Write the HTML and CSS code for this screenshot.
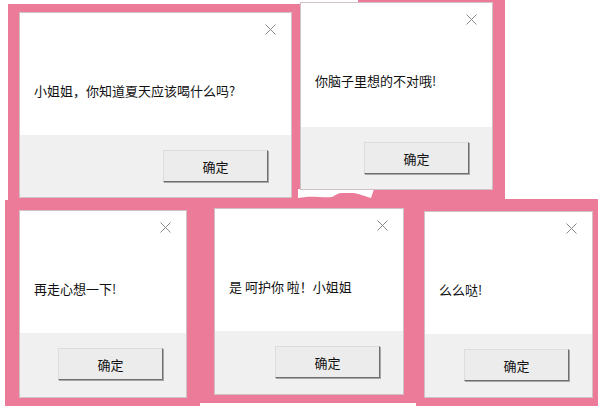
FILE: index.html
```html
<!DOCTYPE html>
<html lang="zh-CN">
<head>
    <meta charset="UTF-8">
    <meta name="viewport" content="width=device-width, initial-scale=1.0">
    <title>小姐姐</title>
    <link rel="stylesheet" href="styles.css">
</head>
<body>
    <div class="desk">
        <!-- pink backdrop pieces -->
        <div class="pink pink-top-left"></div>
        <div class="pink pink-mid"></div>
        <div class="pink pink-cap"></div>
        <div class="pink pink-bot-left"></div>
        <div class="pink pink-bot-mid"></div>
        <div class="pink pink-bot-right"></div>
        <svg class="blob" width="76" height="10" viewBox="0 0 76 10">
            <path d="M0 0 H76 L73 9 C66 7 62 5 56 4 L44 4 C40 4 38 6 34 8 C26 9 16 7 8 8 L0 9 Z" fill="#fff"/>
        </svg>

        <div class="win win-1">
            <div class="win-body">
                <div class="win-head">
                    <svg class="win-close" width="11" height="11" viewBox="0 0 11 11"><path d="M0.5 0.5 L10.5 10.5 M10.5 0.5 L0.5 10.5" stroke="#8a8a8a" stroke-width="1"/></svg>
                </div>
                <p class="win-text">小姐姐，你知道夏天应该喝什么吗?</p>
            </div>
            <div class="win-foot"><button class="win-btn">确定</button></div>
        </div>

        <div class="win win-2">
            <div class="win-body">
                <div class="win-head">
                    <svg class="win-close" width="11" height="11" viewBox="0 0 11 11"><path d="M0.5 0.5 L10.5 10.5 M10.5 0.5 L0.5 10.5" stroke="#8a8a8a" stroke-width="1"/></svg>
                </div>
                <p class="win-text">你脑子里想的不对哦!</p>
            </div>
            <div class="win-foot"><button class="win-btn">确定</button></div>
        </div>

        <div class="win win-3">
            <div class="win-body">
                <div class="win-head">
                    <svg class="win-close" width="11" height="11" viewBox="0 0 11 11"><path d="M0.5 0.5 L10.5 10.5 M10.5 0.5 L0.5 10.5" stroke="#8a8a8a" stroke-width="1"/></svg>
                </div>
                <p class="win-text">再走心想一下!</p>
            </div>
            <div class="win-foot"><button class="win-btn">确定</button></div>
        </div>

        <div class="win win-4">
            <div class="win-body">
                <div class="win-head">
                    <svg class="win-close" width="11" height="11" viewBox="0 0 11 11"><path d="M0.5 0.5 L10.5 10.5 M10.5 0.5 L0.5 10.5" stroke="#8a8a8a" stroke-width="1"/></svg>
                </div>
                <p class="win-text">是 呵护你 啦！小姐姐</p>
            </div>
            <div class="win-foot"><button class="win-btn">确定</button></div>
        </div>

        <div class="win win-5">
            <div class="win-body">
                <div class="win-head">
                    <svg class="win-close" width="11" height="11" viewBox="0 0 11 11"><path d="M0.5 0.5 L10.5 10.5 M10.5 0.5 L0.5 10.5" stroke="#8a8a8a" stroke-width="1"/></svg>
                </div>
                <p class="win-text">么么哒!</p>
            </div>
            <div class="win-foot"><button class="win-btn">确定</button></div>
        </div>
    </div>
</body>
</html>
```

FILE: styles.css
```css
body {
    margin: 0;
    padding: 0;
    background-color: #fff;
    font-family: "Noto Sans CJK SC", "Liberation Sans", sans-serif;
}

.desk {
    position: relative;
    width: 606px;
    height: 418px;
    overflow: hidden;
}

/* backdrop */
.pink {
    position: absolute;
    background-color: #ec7b99;
}

.pink-top-left { left: 8px; top: 4px; width: 289px; height: 202px; }
.pink-mid { left: 297px; top: 4px; width: 208px; height: 200px; }
.pink-cap { left: 358px; top: 0; width: 147px; height: 4px; }
.pink-bot-left { left: 5px; top: 200px; width: 195px; height: 206px; }
.pink-bot-mid { left: 200px; top: 200px; width: 216px; height: 203px; }
.pink-bot-right { left: 416px; top: 199px; width: 182px; height: 207px; }

.blob {
    position: absolute;
    left: 298px;
    top: 189px;
}

/* dialog windows */
.win {
    position: absolute;
    box-sizing: border-box;
    display: flex;
    flex-direction: column;
    background-color: #fff;
    border: 1px solid rgba(90, 30, 50, 0.28);
}

.win-1 { left: 19px; top: 12px; width: 273px; height: 186px; }
.win-2 { left: 300px; top: 2px; width: 193px; height: 188px; }
.win-3 { left: 19px; top: 210px; width: 168px; height: 188px; }
.win-4 { left: 214px; top: 208px; width: 190px; height: 187px; }
.win-5 { left: 424px; top: 211px; width: 169px; height: 187px; }

.win-body {
    height: 122px;
    padding: 0 14px;
    display: flex;
    flex-direction: column;
}

.win-2 .win-body {
    height: 124px;
}

.win-head {
    display: flex;
    justify-content: flex-end;
    padding: 11px 1px 0 0;
}

.win-close {
    display: block;
}

.win-text {
    margin: 47px 0 0;
    font-size: 13px;
    line-height: 18px;
    color: #111;
    white-space: nowrap;
}

.win-foot {
    flex: 1;
    display: flex;
    justify-content: flex-end;
    align-items: flex-start;
    padding: 15px 23px 0 0;
    background-color: #f0f0f0;
}

.win-btn {
    width: 105px;
    height: 32px;
    padding: 0;
    font-family: "Noto Sans CJK SC", "Liberation Sans", sans-serif;
    font-size: 13px;
    color: #111;
    background-color: #ececec;
    border: 1px solid;
    border-color: #dcdcdc #6f6f6f #6f6f6f #dcdcdc;
    box-shadow: 1px 1px 0 #a8a8a8;
    cursor: pointer;
}
```
